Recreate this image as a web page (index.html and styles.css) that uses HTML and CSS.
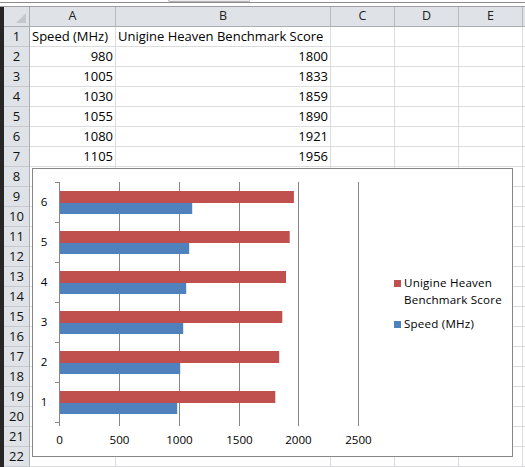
FILE: index.html
```html
<!DOCTYPE html>
<html>
<head>
<meta charset="utf-8">
<link rel="stylesheet" href="styles.css">
</head>
<body>
<div class="app">
  <div class="topbar"><div class="thumb"></div></div>
  <div class="main">
    <div class="strip"></div>
    <div class="grid">
      <div class="corner"><span class="tri"></span></div><div class="h">A</div><div class="h">B</div><div class="h">C</div><div class="h">D</div><div class="h">E</div><div class="h last"></div>
      <div class="r">1</div><div class="c">Speed (MHz)</div><div class="c">Unigine Heaven Benchmark Score</div><div class="c"></div><div class="c"></div><div class="c"></div><div class="c last"></div>
      <div class="r">2</div><div class="c n">980</div><div class="c n">1800</div><div class="c"></div><div class="c"></div><div class="c"></div><div class="c last"></div>
      <div class="r">3</div><div class="c n">1005</div><div class="c n">1833</div><div class="c"></div><div class="c"></div><div class="c"></div><div class="c last"></div>
      <div class="r">4</div><div class="c n">1030</div><div class="c n">1859</div><div class="c"></div><div class="c"></div><div class="c"></div><div class="c last"></div>
      <div class="r">5</div><div class="c n">1055</div><div class="c n">1890</div><div class="c"></div><div class="c"></div><div class="c"></div><div class="c last"></div>
      <div class="r">6</div><div class="c n">1080</div><div class="c n">1921</div><div class="c"></div><div class="c"></div><div class="c"></div><div class="c last"></div>
      <div class="r">7</div><div class="c n">1105</div><div class="c n">1956</div><div class="c"></div><div class="c"></div><div class="c"></div><div class="c last"></div>
      <div class="r">8</div><div class="c"></div><div class="c"></div><div class="c"></div><div class="c"></div><div class="c"></div><div class="c last"></div>
      <div class="r">9</div><div class="c"></div><div class="c"></div><div class="c"></div><div class="c"></div><div class="c"></div><div class="c last"></div>
      <div class="r">10</div><div class="c"></div><div class="c"></div><div class="c"></div><div class="c"></div><div class="c"></div><div class="c last"></div>
      <div class="r">11</div><div class="c"></div><div class="c"></div><div class="c"></div><div class="c"></div><div class="c"></div><div class="c last"></div>
      <div class="r">12</div><div class="c"></div><div class="c"></div><div class="c"></div><div class="c"></div><div class="c"></div><div class="c last"></div>
      <div class="r">13</div><div class="c"></div><div class="c"></div><div class="c"></div><div class="c"></div><div class="c"></div><div class="c last"></div>
      <div class="r">14</div><div class="c"></div><div class="c"></div><div class="c"></div><div class="c"></div><div class="c"></div><div class="c last"></div>
      <div class="r">15</div><div class="c"></div><div class="c"></div><div class="c"></div><div class="c"></div><div class="c"></div><div class="c last"></div>
      <div class="r">16</div><div class="c"></div><div class="c"></div><div class="c"></div><div class="c"></div><div class="c"></div><div class="c last"></div>
      <div class="r">17</div><div class="c"></div><div class="c"></div><div class="c"></div><div class="c"></div><div class="c"></div><div class="c last"></div>
      <div class="r">18</div><div class="c"></div><div class="c"></div><div class="c"></div><div class="c"></div><div class="c"></div><div class="c last"></div>
      <div class="r">19</div><div class="c"></div><div class="c"></div><div class="c"></div><div class="c"></div><div class="c"></div><div class="c last"></div>
      <div class="r">20</div><div class="c"></div><div class="c"></div><div class="c"></div><div class="c"></div><div class="c"></div><div class="c last"></div>
      <div class="r">21</div><div class="c"></div><div class="c"></div><div class="c"></div><div class="c"></div><div class="c"></div><div class="c last"></div>
      <div class="r">22</div><div class="c"></div><div class="c"></div><div class="c"></div><div class="c"></div><div class="c"></div><div class="c last"></div>
    </div>
  </div>
  <div class="chart">
    <svg class="plot" width="479" height="287" viewBox="33 169 479 287" xmlns="http://www.w3.org/2000/svg">
      <g class="grid-lines">
        <line x1="119.5" y1="182" x2="119.5" y2="426"/>
        <line x1="179.5" y1="182" x2="179.5" y2="426"/>
        <line x1="239.5" y1="182" x2="239.5" y2="426"/>
        <line x1="298.5" y1="182" x2="298.5" y2="426"/>
        <line x1="358.5" y1="182" x2="358.5" y2="426"/>
      </g>
      <g class="red">
        <rect x="60" y="191" width="233.9" height="12"/>
        <rect x="60" y="231" width="229.7" height="12"/>
        <rect x="60" y="271" width="226.0" height="12"/>
        <rect x="60" y="311" width="222.3" height="12"/>
        <rect x="60" y="351" width="219.2" height="12"/>
        <rect x="60" y="391" width="215.3" height="12"/>
      </g>
      <g class="blue">
        <rect x="60" y="203" width="132.2" height="11"/>
        <rect x="60" y="243" width="129.2" height="11"/>
        <rect x="60" y="283" width="126.2" height="11"/>
        <rect x="60" y="323" width="123.2" height="11"/>
        <rect x="60" y="363" width="120.2" height="11"/>
        <rect x="60" y="403" width="117.2" height="11"/>
      </g>
      <g class="grid-lines">
        <line x1="59.5" y1="182" x2="59.5" y2="426"/>
        <line x1="55" y1="182.5" x2="60" y2="182.5"/>
        <line x1="55" y1="222.5" x2="60" y2="222.5"/>
        <line x1="55" y1="262.5" x2="60" y2="262.5"/>
        <line x1="55" y1="302.5" x2="60" y2="302.5"/>
        <line x1="55" y1="342.5" x2="60" y2="342.5"/>
        <line x1="55" y1="382.5" x2="60" y2="382.5"/>
        <line x1="55" y1="422.5" x2="60" y2="422.5"/>
      </g>
      <g class="lbl cat">
        <text x="44" y="206">6</text>
        <text x="44" y="246">5</text>
        <text x="44" y="286">4</text>
        <text x="44" y="326">3</text>
        <text x="44" y="366">2</text>
        <text x="44" y="406">1</text>
      </g>
      <g class="lbl axis">
        <text x="59.5" y="444">0</text>
        <text x="119.5" y="444">500</text>
        <text x="179.5" y="444">1000</text>
        <text x="239.5" y="444">1500</text>
        <text x="298.5" y="444">2000</text>
        <text x="358.5" y="444">2500</text>
      </g>
      <g class="legend">
        <rect class="sw-red" x="394" y="280" width="7" height="7"/>
        <text x="404" y="287">Unigine Heaven</text>
        <text x="404" y="304">Benchmark Score</text>
        <rect class="sw-blue" x="394" y="321" width="7" height="7"/>
        <text x="404" y="328">Speed (MHz)</text>
      </g>
    </svg>
  </div>
</div>
</body>
</html>
```

FILE: styles.css
```css
html, body {
  margin: 0;
  padding: 0;
  background: #ffffff;
}

.app {
  position: relative;
  width: 525px;
  height: 467px;
  overflow: hidden;
  font-family: "Open Sans", "Liberation Sans", sans-serif;
  color: #000;
}

.topbar {
  height: 2px;
  border-bottom: 1px solid #8c8c8c;
  margin-bottom: 3px;
  display: flex;
}

.thumb {
  margin-left: 168px;
  width: 80px;
  height: 1px;
  background: #ececec;
  border: 1px solid #b5b5b5;
  border-top: none;
  border-radius: 0 0 3px 3px;
}

.main {
  display: flex;
  border-top: 1px solid #9d9d9d;
}

.strip {
  width: 4px;
  background: #262626;
  flex: none;
}

.grid {
  display: grid;
  grid-template-columns: 26px 86px 215px 64px 64px 64px 2px;
  grid-auto-rows: 20px;
  flex: none;
}

.grid > div {
  box-sizing: border-box;
  white-space: nowrap;
  font-size: 13px;
  line-height: 19px;
}

.corner {
  background: #dfe3e8;
  border-right: 1px solid #abafb4;
  border-bottom: 1px solid #abafb4;
  position: relative;
}

.tri {
  position: absolute;
  right: 3px;
  bottom: 3px;
  width: 0;
  height: 0;
  border-left: 10px solid transparent;
  border-bottom: 10px solid #c3c7cc;
}

.grid > .h {
  background: #dfe3e8;
  border-right: 1px solid #b6babf;
  border-bottom: 1px solid #abafb4;
  text-align: center;
  color: #222;
  font-size: 12.5px;
  line-height: 17px;
}

.grid > .h.last {
  border-right: none;
}

.r {
  background: #dfe3e8;
  border-right: 1px solid #abafb4;
  border-bottom: 1px solid #c6cacf;
  text-align: center;
  color: #111;
}

.c {
  border-right: 1px solid #dadcdd;
  border-bottom: 1px solid #dadcdd;
  padding: 0 2px;
}

.c.last {
  border-right: none;
  padding: 0;
}

.n {
  text-align: right;
}

.chart {
  position: absolute;
  left: 32px;
  top: 168px;
  width: 481px;
  height: 289px;
  box-sizing: border-box;
  border: 1px solid #878787;
  background: #ffffff;
}

.plot {
  display: block;
}

.grid-lines line {
  stroke: #868686;
  stroke-width: 1;
}

.red rect,
.sw-red {
  fill: #c0504d;
}

.blue rect,
.sw-blue {
  fill: #4f81bd;
}

.lbl text,
.legend text {
  font-family: "Open Sans", "Liberation Sans", sans-serif;
  font-size: 11.6px;
  fill: #000;
}

.legend text {
  letter-spacing: 0.2px;
}

.lbl text {
  text-anchor: middle;
}
```
